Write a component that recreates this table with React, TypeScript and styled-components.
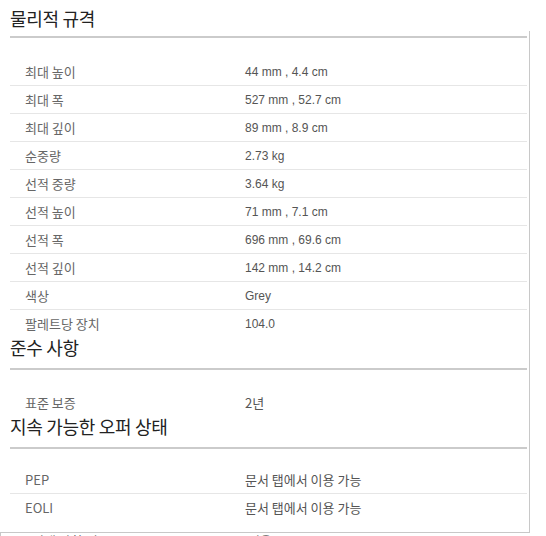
import React from "react";
import styled, { createGlobalStyle } from "styled-components";

const GlobalStyle = createGlobalStyle`
  html, body {
    margin: 0;
    padding: 0;
    background: #ffffff;
    overflow: hidden;
  }
  body {
    font-family: "Noto Sans CJK KR", "Noto Sans", sans-serif;
    color: #555;
  }
`;

const Page = styled.div`
  width: 546px;
  height: 536px;
  overflow: hidden;
  display: flex;
  flex-direction: column;
`;

const Title = styled.h2<{ $first?: boolean }>`
  margin: 0;
  padding: ${(p) => (p.$first ? "5px 0 0 10px" : "0")};
  font-family: "Noto Sans CJK KR", sans-serif;
  font-size: 18px;
  font-weight: 400;
  letter-spacing: -0.3px;
  line-height: 26px;
  color: #222;
`;

const Box = styled.div`
  width: 517px;
  padding: 0 2px 14px 10px;
  border-right: 1px solid #c8c8c8;
  border-bottom: 1px solid #c8c8c8;
  display: flex;
  flex-direction: column;
`;

const Rule = styled.div<{ $top: number }>`
  height: 2px;
  background: #cbcbcb;
  margin-top: ${(p) => p.$top}px;
`;

const Table = styled.div<{ $top: number }>`
  margin-top: ${(p) => p.$top}px;
  display: flex;
  flex-direction: column;
`;

const Row = styled.div`
  display: grid;
  grid-template-columns: 235px 1fr;
  padding: 6px 0 5px;
  line-height: 16px;
  border-bottom: 1px solid #e6e6e6;

  &:last-child {
    border-bottom: none;
    padding-bottom: 2px;
  }
`;

const Label = styled.div`
  padding-left: 15px;
  font-family: "Noto Sans CJK KR", sans-serif;
  font-size: 13px;
  color: #666;
`;

const Value = styled.div<{ $ko?: boolean }>`
  font-family: ${(p) =>
    p.$ko ? '"Noto Sans CJK KR", sans-serif' : '"Liberation Sans", "Noto Sans CJK KR", sans-serif'};
  font-size: ${(p) => (p.$ko ? "13px" : "12px")};
  color: #555;
`;

const NextBox = styled.div`
  border-left: 1px solid #c8c8c8;
  padding: 0 0 0 31px;
  display: grid;
  grid-template-columns: 216px 1fr;
  font-size: 13px;
  line-height: 16px;
  color: #666;
  font-family: "Noto Sans CJK KR", sans-serif;
`;

type Spec = [string, string];

const physical: Spec[] = [
  ["최대 높이", "44 mm , 4.4 cm"],
  ["최대 폭", "527 mm , 52.7 cm"],
  ["최대 깊이", "89 mm , 8.9 cm"],
  ["순중량", "2.73 kg"],
  ["선적 중량", "3.64 kg"],
  ["선적 높이", "71 mm , 7.1 cm"],
  ["선적 폭", "696 mm , 69.6 cm"],
  ["선적 깊이", "142 mm , 14.2 cm"],
  ["색상", "Grey"],
  ["팔레트당 장치", "104.0"],
];

const compliance: Spec[] = [["표준 보증", "2년"]];

const sustainability: Spec[] = [
  ["PEP", "문서 탭에서 이용 가능"],
  ["EOLI", "문서 탭에서 이용 가능"],
];

const hasHangul = (s: string) => /[\uAC00-\uD7A3]/.test(s);

function SpecTable({ rows, top }: { rows: Spec[]; top: number }) {
  return (
    <Table $top={top}>
      {rows.map(([k, v]) => (
        <Row key={k}>
          <Label>{k}</Label>
          <Value $ko={hasHangul(v)}>{v}</Value>
        </Row>
      ))}
    </Table>
  );
}

export default function App() {
  return (
    <Page>
      <GlobalStyle />
      <Title $first>물리적 규격</Title>
      <Box>
        <Rule $top={5} />
        <SpecTable rows={physical} top={20} />
        <Title>준수 사항</Title>
        <Rule $top={8} />
        <SpecTable rows={compliance} top={19} />
        <Title>지속 가능한 오퍼 상태</Title>
        <Rule $top={8} />
        <SpecTable rows={sustainability} top={17} />
      </Box>
      <NextBox>
        <span>선택 사항 정보</span>
        <span>없음</span>
      </NextBox>
    </Page>
  );
}
